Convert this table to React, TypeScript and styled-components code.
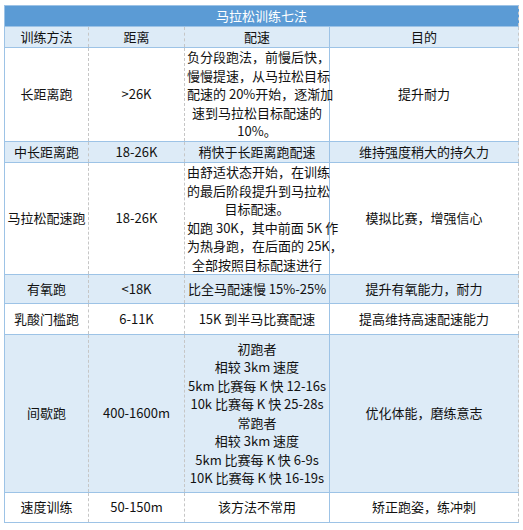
import styled, { createGlobalStyle } from "styled-components";

// ==================== 마라톤 훈련 표 =================

const GlobalStyle = createGlobalStyle`
  body {
    margin: 0;
    background: #fff;
    font-family: "Noto Sans CJK SC", "Noto Sans", sans-serif;
  }
`;

const App = () => {
  return (
    <Page>
      <GlobalStyle />
      <Table>
        <colgroup>
          <col style={{ width: 84 }} />
          <col style={{ width: 96 }} />
          <col style={{ width: 145 }} />
          <col style={{ width: 189 }} />
        </colgroup>
        <thead>
          <tr>
            <TitleCell colSpan={4}>马拉松训练七法</TitleCell>
          </tr>
          <tr>
            <HeadCell>训练方法</HeadCell>
            <HeadCell>距离</HeadCell>
            <HeadCell>配速</HeadCell>
            <HeadCell>目的</HeadCell>
          </tr>
        </thead>
        <tbody>
          {dataRows.map((row) => (
            <Row key={row.name} $shaded={row.shaded} $h={row.height}>
              <Cell>{row.name}</Cell>
              <Cell>{row.distance}</Cell>
              <Cell>
                {row.pace.map((line, i) => (
                  <Line key={i}>{line}</Line>
                ))}
              </Cell>
              <Cell>{row.goal}</Cell>
            </Row>
          ))}
        </tbody>
      </Table>
    </Page>
  );
};

export default App;

const Page = styled.div`
  padding: 5px 5px 0 4px;
`;

const Table = styled.table`
  width: 514px;
  table-layout: fixed;
  border-collapse: collapse;
  font-size: 13px;
  color: #111;
  border-left: 1px solid #9dc3e6;

  th,
  td {
    padding: 0 2px;
    text-align: center;
    vertical-align: middle;
    border-top: 1px solid #9dc3e6;
    border-bottom: 1px solid #9dc3e6;
    border-left: none;
  }

  // 1, 2열은 회색 점선
  th:nth-child(1),
  th:nth-child(2),
  td:nth-child(1),
  td:nth-child(2),
  th:nth-child(4),
  td:nth-child(4) {
    border-right: 1px dashed #c6c6c6;
  }

  // 3열은 파란 실선
  th:nth-child(3),
  td:nth-child(3) {
    border-right: 1px solid #9dc3e6;
  }
`;

const TitleCell = styled.th`
  && {
    height: 20px;
    background: #5b9bd5;
    color: #fff;
    font-weight: 400;
    line-height: 18px;
    border-right: 1px dashed #c6c6c6;
  }
`;

const HeadCell = styled.th`
  height: 20px;
  background: #ddebf7;
  font-weight: 400;
  line-height: 18px;
`;

const Row = styled.tr<{ $shaded?: boolean; $h: number }>`
  height: ${(p) => p.$h}px;
  background: ${(p) => (p.$shaded ? "#ddebf7" : "#fff")};

  td {
    line-height: 18.5px;
  }
`;

const Cell = styled.td``;

const Line = styled.div`
  white-space: nowrap;
`;

//  ============ 데이터 ===================

const dataRows = [
  {
    name: "长距离跑",
    distance: ">26K",
    pace: [
      "负分段跑法，前慢后快，",
      "慢慢提速，从马拉松目标",
      "配速的 20%开始，逐渐加",
      "速到马拉松目标配速的",
      "10%。",
    ],
    goal: "提升耐力",
    shaded: false,
    height: 94,
  },
  {
    name: "中长距离跑",
    distance: "18-26K",
    pace: ["稍快于长距离跑配速"],
    goal: "维持强度稍大的持久力",
    shaded: true,
    height: 21,
  },
  {
    name: "马拉松配速跑",
    distance: "18-26K",
    pace: [
      "由舒适状态开始，在训练",
      "的最后阶段提升到马拉松",
      "目标配速。",
      "如跑 30K，其中前面 5K 作",
      "为热身跑，在后面的 25K，",
      "全部按照目标配速进行",
    ],
    goal: "模拟比赛，增强信心",
    shaded: false,
    height: 112,
  },
  {
    name: "有氧跑",
    distance: "<18K",
    pace: ["比全马配速慢 15%-25%"],
    goal: "提升有氧能力，耐力",
    shaded: true,
    height: 29,
  },
  {
    name: "乳酸门槛跑",
    distance: "6-11K",
    pace: ["15K 到半马比赛配速"],
    goal: "提高维持高速配速能力",
    shaded: false,
    height: 31,
  },
  {
    name: "间歇跑",
    distance: "400-1600m",
    pace: [
      "初跑者",
      "相较 3km 速度",
      "5km 比赛每 K 快 12-16s",
      "10k 比赛每 K 快 25-28s",
      "常跑者",
      "相较 3km 速度",
      "5km 比赛每 K 快 6-9s",
      "10K 比赛每 K 快 16-19s",
    ],
    goal: "优化体能，磨练意志",
    shaded: true,
    height: 158,
  },
  {
    name: "速度训练",
    distance: "50-150m",
    pace: ["该方法不常用"],
    goal: "矫正跑姿，练冲刺",
    shaded: false,
    height: 30,
  },
];
